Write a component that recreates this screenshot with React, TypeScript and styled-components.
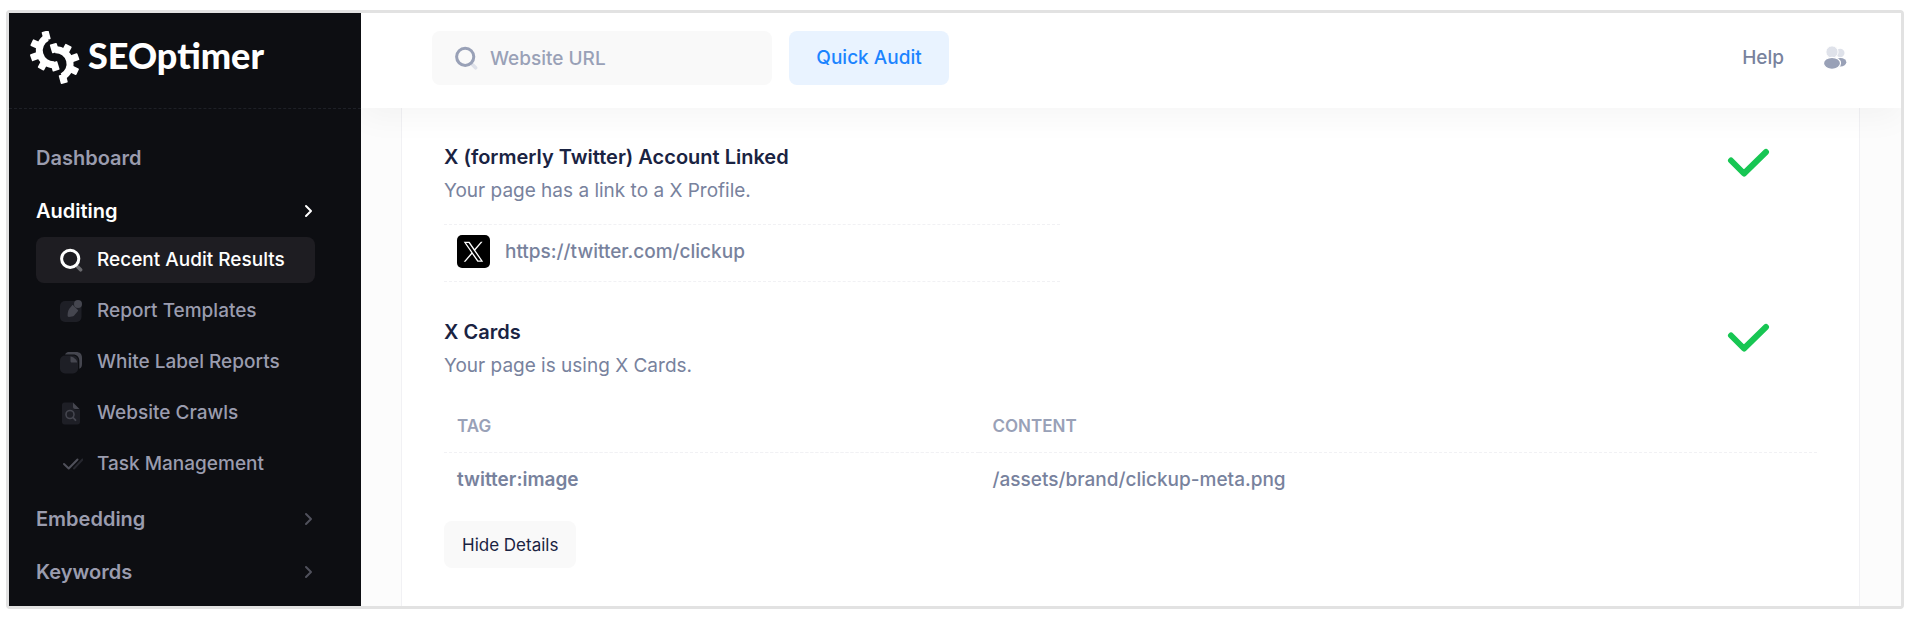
import React from 'react';
import styled, { createGlobalStyle } from 'styled-components';

const GlobalStyle = createGlobalStyle`
  *, *::before, *::after { box-sizing: border-box; }
  body {
    margin: 0;
    background: #fff;
    font-family: Inter, "Liberation Sans", sans-serif;
    font-size: 19px;
    line-height: 24px;
    color: #78829d;
  }
  button, input { font: inherit; }
  a { color: inherit; text-decoration: none; }
`;

const Page = styled.div`
  display: flex;
  min-height: 100vh;
  padding: 10px 6px 11px;
`;

const Frame = styled.div`
  display: flex;
  flex: 1;
  border: 3px solid #e2e2e2;
  border-radius: 4px;
`;

const Sidebar = styled.aside`
  position: relative;
  z-index: 2;
  flex: 0 0 352px;
  background: #0d0e12;
`;

const Brand = styled.a`
  display: flex;
  align-items: flex-start;
  gap: 7px;
  height: 96px;
  padding: 18px 20px;
  border-bottom: 1px dashed #1e2027;
  color: #fff;
`;

const BrandName = styled.span`
  font-family: Lato, sans-serif;
  font-weight: 900;
  font-size: 36px;
  line-height: 48px;
`;

const Nav = styled.nav`
  display: flex;
  flex-direction: column;
  gap: 6px;
  padding: 25px 46px 8px 27px;
`;

const NavLink = styled.a<{ $active?: boolean }>`
  display: flex;
  align-items: center;
  justify-content: space-between;
  height: 47px;
  padding-right: 2px;
  font-size: 20px;
  font-weight: 600;
  color: ${(p) => (p.$active ? '#fff' : '#9a9cae')};
  svg { color: ${(p) => (p.$active ? '#fff' : '#50515c')}; }
`;

const SubMenu = styled.div`
  display: flex;
  flex-direction: column;
  gap: 5px;
  padding: 3px 0 2px;
`;

const SubLink = styled.a<{ $active?: boolean }>`
  display: flex;
  align-items: center;
  gap: 14px;
  height: 46px;
  padding-left: 23px;
  border-radius: 8px;
  font-weight: 500;
  color: ${(p) => (p.$active ? '#fff' : '#9a9cae')};
  background: ${(p) => (p.$active ? '#1e1d22' : 'transparent')};
`;

const Main = styled.main`
  display: flex;
  flex-direction: column;
  flex: 1;
  min-width: 0;
  overflow: hidden;
  background: #fcfcfc;
`;

const Header = styled.header`
  position: relative;
  z-index: 1;
  display: flex;
  align-items: flex-start;
  justify-content: space-between;
  height: 95px;
  padding: 18px 54px 0 71px;
  background: #fff;
  box-shadow: 0 10px 30px rgba(0, 0, 0, 0.04);
`;

const AuditForm = styled.form`
  display: flex;
  gap: 17px;
`;

const SearchBox = styled.label`
  display: flex;
  align-items: center;
  gap: 12px;
  width: 340px;
  height: 54px;
  padding: 0 22px;
  border-radius: 8px;
  background: #f9f9f9;
`;

const SearchInput = styled.input`
  flex: 1;
  min-width: 0;
  padding: 2px 0 0;
  border: 0;
  outline: 0;
  background: transparent;
  font-weight: 500;
  color: #4b5675;
  &::placeholder { color: #99a1b7; opacity: 1; }
`;

const AuditButton = styled.button`
  width: 160px;
  height: 54px;
  padding: 0;
  border: 0;
  border-radius: 8px;
  background: #e9f3ff;
  color: #1b84ff;
  font-weight: 500;
`;

const HeaderLinks = styled.div`
  display: flex;
  align-items: center;
  gap: 39px;
  height: 54px;
  font-weight: 500;
`;

const IconButton = styled.button`
  display: flex;
  padding: 0;
  border: 0;
  background: transparent;
`;

const Card = styled.div`
  flex: 1;
  margin: 0 41px 0 40px;
  padding: 37px 42px 38px;
  border: solid #f1f1f4;
  border-width: 0 1px;
  background: #fff;
`;

const Section = styled.section`
  & + & { margin-top: 38px; }
`;

const SectionHead = styled.div`
  display: flex;
  justify-content: space-between;
  align-items: flex-start;
  padding-right: 47px;
`;

const Title = styled.h2`
  margin: 0;
  font-size: 20px;
  font-weight: 600;
  line-height: 24px;
  color: #1a2342;
`;

const Summary = styled.p`
  margin: 10px 0 0;
  font-weight: 400;
`;

const ProfileRow = styled.div`
  display: flex;
  align-items: center;
  gap: 15px;
  max-width: 616px;
  height: 58px;
  margin-top: 21px;
  padding: 0 13px 3px;
  border: dashed #f1f1f4;
  border-width: 1px 0;
  font-weight: 500;
`;

const DataTable = styled.table`
  width: 100%;
  margin-top: 21px;
  border-collapse: collapse;
  text-align: left;
  th, td { height: 53px; padding: 2px 13px 0; }
  thead th {
    border-bottom: 1px dashed #f1f1f4;
    font-size: 17px;
    font-weight: 600;
    color: #99a1b7;
  }
  thead th:first-child { width: 39%; }
  tbody th { font-weight: 600; }
  tbody td { font-weight: 500; }
`;

const DetailsButton = styled.button`
  height: 47px;
  margin-top: 16px;
  padding: 0 18px;
  border: 0;
  border-radius: 8px;
  background: #f9f9f9;
  color: #1a2342;
  font-size: 17px;
`;

const GEAR_TEETH = [-105, -155, -200, -242, -287];

const GearHalf = () => (
  <g>
    <path d="M18.1 6.700A14.300 14.300 0 0 0 25.400 33.700" fill="none" stroke="#fff" strokeWidth="7" />
    {GEAR_TEETH.map((a) => (
      <rect key={a} x="11.500" y="-3.600" width="9" height="7.200" rx="0.800" fill="#fff" transform={`translate(21.300 20) rotate(${a})`} />
    ))}
  </g>
);

const LogoMark = () => (
  <svg width="52" height="54" viewBox="0 0 52 54" aria-hidden="true">
    <GearHalf />
    <g transform="rotate(180 25.700 26.200)">
      <GearHalf />
    </g>
  </svg>
);

const Chevron = () => (
  <svg width="10" height="14" viewBox="0 0 10 14" fill="none" stroke="currentColor" strokeWidth="2" strokeLinecap="round" strokeLinejoin="round" aria-hidden="true">
    <path d="M3 2l5 5-5 5" />
  </svg>
);

const SearchIcon = ({ ring, handle }: { ring: string; handle: string }) => (
  <svg width="24" height="24" viewBox="0 0 24 24" fill="none" aria-hidden="true">
    <path d="M18.6 18.8l3 3" stroke={handle} strokeWidth="3.6" strokeLinecap="round" />
    <circle cx="11.2" cy="10.8" r="8.6" stroke={ring} strokeWidth="3" />
  </svg>
);

const PencilIcon = () => (
  <svg width="24" height="24" viewBox="0 0 24 24" aria-hidden="true">
    <rect x="1" y="2" width="21.500" height="21" rx="5" fill="#1e1f26" />
    <path d="M13 6.500c.4-.5.9-.5 1.300-.1l4.600 4.600c.4.4.4.9-.1 1.300l-3.600 4.200c-1 1-3.200 1.400-5.400 1.400-.7 0-1.200-.4-1.200-1.100 0-2.600.4-5.300 1.700-7z" fill="#45464f" />
    <circle cx="19" cy="5" r="4" fill="#45464f" />
  </svg>
);

const ReportIcon = () => (
  <svg width="24" height="24" viewBox="0 0 24 24" aria-hidden="true">
    <path d="M6 4.500C7 2.500 8.500 2 10.500 2H17c4 0 6 2 6 6v6c0 2.300-.6 4-2.700 4.800V11C20.300 7 18 4.500 14 4.500z" fill="#45464f" />
    <rect x="1" y="5.500" width="18" height="18" rx="5" fill="#1e1f26" />
    <path d="M11.500 6.500c2 0 6.700 3 6.700 6H13c-1 0-1.500-.5-1.500-1.500z" fill="#45464f" />
  </svg>
);

const CrawlIcon = () => (
  <svg width="24" height="24" viewBox="0 0 24 24" fill="none" aria-hidden="true">
    <path d="M5.500 1.500H14v4c0 2 1 3 3 3h4V21c0 1.500-1 2.500-2.500 2.500h-13C4 23.500 3 22.500 3 21V4c0-1.500 1-2.500 2.500-2.500z" fill="#1e1f26" />
    <path d="M14 1.500l6.500 6.500H16c-1.300 0-2-.7-2-2z" fill="#45464f" />
    <circle cx="11" cy="13.500" r="4" stroke="#45464f" strokeWidth="1.600" />
    <path d="M14 16.500l2.500 2.700" stroke="#45464f" strokeWidth="1.800" strokeLinecap="round" />
  </svg>
);

const TaskIcon = () => (
  <svg width="24" height="24" viewBox="0 0 24 24" fill="none" strokeWidth="2" strokeLinecap="round" strokeLinejoin="round" aria-hidden="true">
    <path d="M15 16.500L23.500 7.500" stroke="#26272e" />
    <path d="M5 12l4.700 4.500L18.500 7.500" stroke="#50515b" />
  </svg>
);

const UsersIcon = () => (
  <svg width="24" height="24" viewBox="0 0 24 24" aria-hidden="true">
    <circle cx="17.300" cy="7" r="4.200" fill="#dfe2ea" />
    <ellipse cx="17.500" cy="16.200" rx="5.800" ry="4.200" fill="#99a1b7" />
    <circle cx="9" cy="6" r="6.100" fill="#dfe2ea" stroke="#fff" />
    <ellipse cx="9" cy="17.300" rx="8.500" ry="6" fill="#99a1b7" stroke="#fff" strokeWidth="1.200" />
  </svg>
);

const CheckMark = () => (
  <svg width="44" height="34" viewBox="0 0 44 34" fill="none" stroke="#17c653" strokeWidth="6" strokeLinecap="round" strokeLinejoin="round" role="img" aria-label="Passed">
    <path d="M5 15.500L18 28.500L40 7" />
  </svg>
);

const XLogo = () => (
  <svg width="33" height="33" viewBox="0 0 33 33" aria-hidden="true">
    <rect width="33" height="33" rx="5" fill="#000" />
    <g transform="translate(6.500 6.800) scale(0.83)">
      <path
        d="M14.234 10.162 22.977 0h-2.072l-7.591 8.824L7.251 0H.258l9.168 13.343L.258 24H2.330l8.016-9.318L16.749 24h6.993zm-2.837 3.299-.929-1.329L3.076 1.560h3.182l5.965 8.532.929 1.329 7.754 11.090h-3.182z"
        fill="#fff"
      />
    </g>
  </svg>
);

const subItems = [
  { label: 'Recent Audit Results', icon: <SearchIcon ring="#fff" handle="#6a6a6e" />, active: true },
  { label: 'Report Templates', icon: <PencilIcon /> },
  { label: 'White Label Reports', icon: <ReportIcon /> },
  { label: 'Website Crawls', icon: <CrawlIcon /> },
  { label: 'Task Management', icon: <TaskIcon /> },
];

export default function App() {
  return (
    <Page>
      <GlobalStyle />
      <Frame>
        <Sidebar>
          <Brand href="#">
            <LogoMark />
            <BrandName>SEOptimer</BrandName>
          </Brand>
          <Nav>
            <NavLink href="#dashboard">Dashboard</NavLink>
            <div>
              <NavLink href="#auditing" $active>
                Auditing
                <Chevron />
              </NavLink>
              <SubMenu>
                {subItems.map((item) => (
                  <SubLink key={item.label} href="#" $active={item.active}>
                    {item.icon}
                    {item.label}
                  </SubLink>
                ))}
              </SubMenu>
            </div>
            <NavLink href="#embedding">
              Embedding
              <Chevron />
            </NavLink>
            <NavLink href="#keywords">
              Keywords
              <Chevron />
            </NavLink>
          </Nav>
        </Sidebar>
        <Main>
          <Header>
            <AuditForm onSubmit={(e) => e.preventDefault()}>
              <SearchBox>
                <SearchIcon ring="#99a1b7" handle="#dfe2ea" />
                <SearchInput type="text" placeholder="Website URL" aria-label="Website URL" />
              </SearchBox>
              <AuditButton type="submit">Quick Audit</AuditButton>
            </AuditForm>
            <HeaderLinks>
              <a href="#help">Help</a>
              <IconButton type="button" aria-label="Account">
                <UsersIcon />
              </IconButton>
            </HeaderLinks>
          </Header>
          <Card>
            <Section>
              <SectionHead>
                <div>
                  <Title>X (formerly Twitter) Account Linked</Title>
                  <Summary>Your page has a link to a X Profile.</Summary>
                </div>
                <CheckMark />
              </SectionHead>
              <ProfileRow>
                <XLogo />
                <a href="https://twitter.com/clickup">https://twitter.com/clickup</a>
              </ProfileRow>
            </Section>
            <Section>
              <SectionHead>
                <div>
                  <Title>X Cards</Title>
                  <Summary>Your page is using X Cards.</Summary>
                </div>
                <CheckMark />
              </SectionHead>
              <DataTable>
                <thead>
                  <tr>
                    <th scope="col">TAG</th>
                    <th scope="col">CONTENT</th>
                  </tr>
                </thead>
                <tbody>
                  <tr>
                    <th scope="row">twitter:image</th>
                    <td>/assets/brand/clickup-meta.png</td>
                  </tr>
                </tbody>
              </DataTable>
              <DetailsButton type="button">Hide Details</DetailsButton>
            </Section>
          </Card>
        </Main>
      </Frame>
    </Page>
  );
}
